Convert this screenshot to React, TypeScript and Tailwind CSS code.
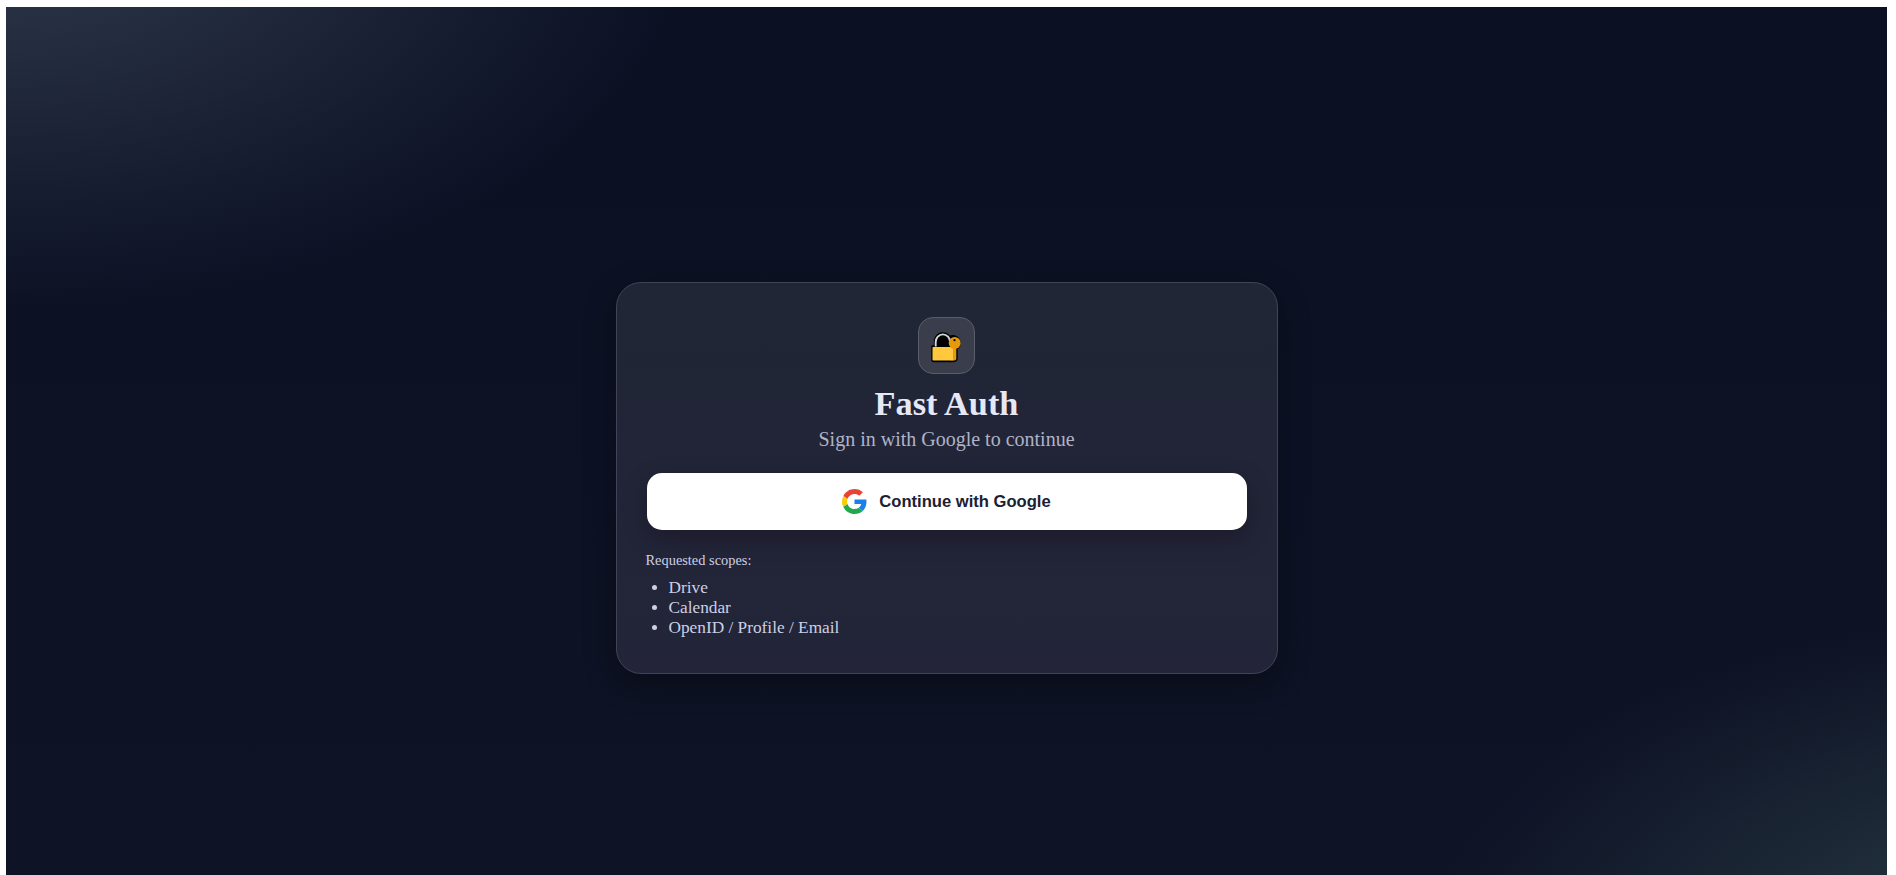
import React from "react";

const scopes = ["Drive", "Calendar", "OpenID / Profile / Email"];

function LockIcon() {
  return (
    <svg className="h-8 w-8 overflow-visible" viewBox="0.500 0 32 32" aria-hidden="true">
      <path d="M4.500 17.500v-5a7.800 7.800 0 0 1 14.500-4.300a6.300 6.300 0 1 1 7 11.300V29.500a2.500 2.500 0 0 1-2.500 2.500H3a1 1 0 0 1-1-1V17.500z" fill="#000" stroke="#000" strokeWidth="2.400" strokeLinejoin="round" />
      <path d="M5.200 17.500v-4.500a7.200 7.600 0 0 1 14.400 0" fill="none" stroke="#d4d6dc" strokeWidth="1.900" />
      <path d="M21 18h4.800v11.500a2 2 0 0 1-2 2h-2.800z" fill="#e59a0b" />
      <rect x="2" y="18" width="20.500" height="13.500" rx="0.800" fill="#ffc83d" />
      <circle cx="24.200" cy="14" r="6" fill="#e59a0b" />
      <circle cx="24" cy="11.200" r="1.100" fill="#000" />
    </svg>
  );
}

function GoogleIcon() {
  return (
    <svg className="h-[25px] w-[25px]" viewBox="0 0 48 48" aria-hidden="true">
      <path fill="#EA4335" d="M24 9.500c3.540 0 6.710 1.220 9.210 3.600l6.850-6.850C35.900 2.380 30.470 0 24 0 14.620 0 6.510 5.380 2.560 13.220l7.980 6.190C12.430 13.720 17.740 9.500 24 9.500z" />
      <path fill="#1a7fe8" d="M46.980 24.550c0-1.570-.15-3.090-.38-4.550H24v9.020h12.940c-.58 2.960-2.260 5.480-4.780 7.180l7.730 6c4.510-4.180 7.090-10.360 7.090-17.650z" />
      <path fill="#FBCB04" d="M10.530 28.590c-.48-1.450-.76-2.990-.76-4.590s.27-3.140.76-4.590l-7.980-6.190C.92 16.460 0 20.120 0 24c0 3.880.92 7.540 2.560 10.780l7.970-6.190z" />
      <path fill="#22A94B" d="M24 48c6.480 0 11.930-2.130 15.890-5.810l-7.730-6c-2.150 1.450-4.920 2.300-8.160 2.300-6.260 0-11.570-4.220-13.470-9.910l-7.980 6.190C6.510 42.620 14.620 48 24 48z" />
    </svg>
  );
}

export default function App() {
  return (
    <div className="h-[875px] bg-white pt-[7px] pr-[9px] pl-[6px]">
      <main className="flex h-[868px] justify-center bg-[#0c1224] bg-[radial-gradient(1150px_650px_at_0%_-10%,rgba(130,150,170,0.31),rgba(130,150,170,0)_60%),radial-gradient(1090px_590px_at_110%_110%,rgba(95,140,135,0.34),rgba(95,140,135,0)_60%),linear-gradient(180deg,#0b1023,#0e1325)] pt-[274.5px] font-['Liberation_Serif',serif]">
        <section className="h-[392px] w-[662px] rounded-[25px] border border-[#414454] bg-linear-to-b from-[#202636] to-[#232439] px-[30px] pt-[34px] shadow-[0_10px_31px_rgba(0,0,0,0.35)]">
          <div className="flex flex-col items-center">
            <div className="flex h-[57px] w-[57px] items-center justify-center rounded-[15px] border border-[#5b5e6a] bg-[#3a3e4c]">
              <LockIcon />
            </div>
            <h1 className="mt-[9px] text-[34.3px] leading-[40px] font-bold text-[#e6e8f6]">Fast Auth</h1>
            <p className="mt-[4px] text-[20px] leading-[24px] text-[#b0b3c6]">Sign in with Google to continue</p>
          </div>
          <button className="mt-[22px] flex h-[57px] w-full items-center justify-center gap-[12px] rounded-[15px] bg-white font-['Liberation_Sans',sans-serif] text-[16.6px] font-bold text-[#1c2032] shadow-[0_8px_24px_rgba(0,0,0,0.25)]">
            <GoogleIcon />
            <span className="pt-[2px]">Continue with Google</span>
          </button>
          <div className="mt-[21px] -ml-px text-[#cdd0e4]">
            <p className="text-[14.4px] leading-[18px]">Requested scopes:</p>
            <ul className="mt-[9px] list-disc pl-[23px] text-[17.3px] leading-[20px]">
              {scopes.map((scope) => (
                <li key={scope}>{scope}</li>
              ))}
            </ul>
          </div>
        </section>
      </main>
    </div>
  );
}
